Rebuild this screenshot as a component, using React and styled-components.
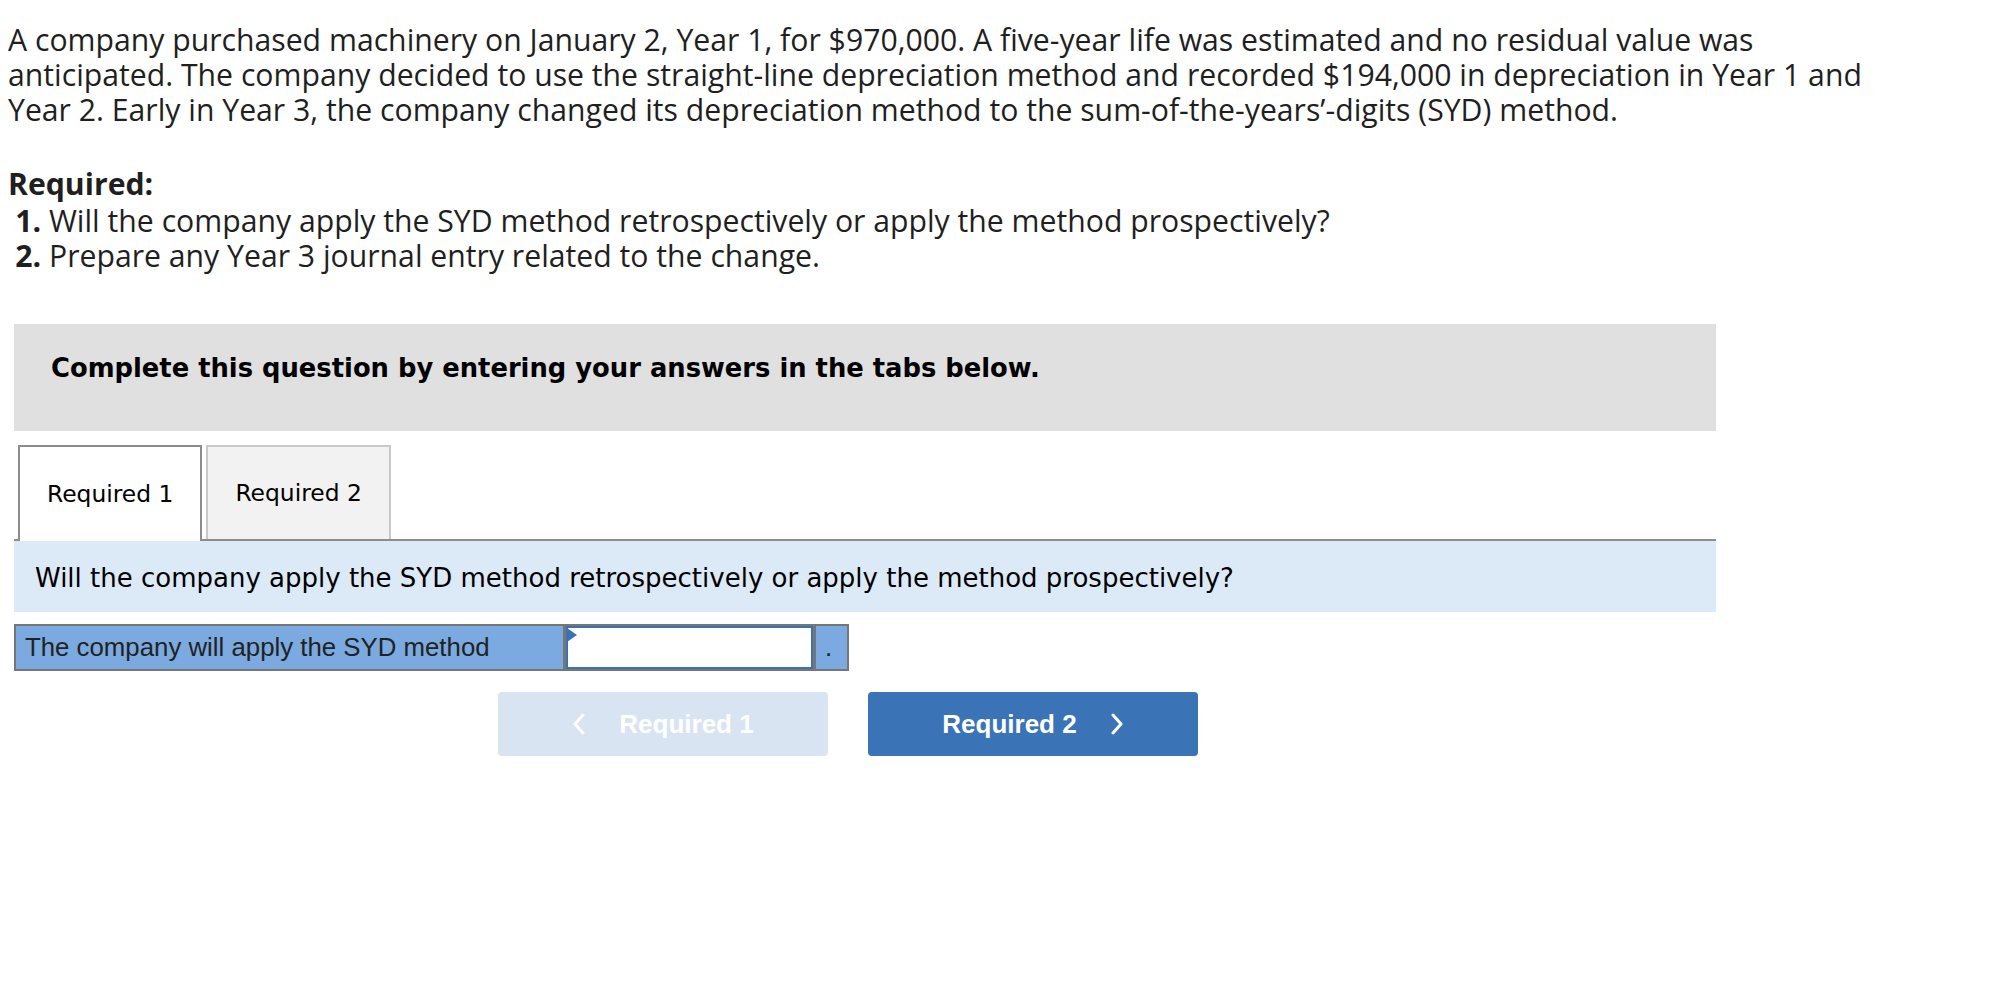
import React from 'react';
import styled, { createGlobalStyle } from 'styled-components';

const GlobalStyle = createGlobalStyle`
  body {
    margin: 8px;
    background: #fff;
    color: #1f1f1f;
    font-family: "Open Sans", "Liberation Sans", sans-serif;
  }
`;

const Intro = styled.p`
  width: 1895px;
  margin: 14px 0 0;
  font-size: 30.2px;
  line-height: 35px;
`;

const RequiredTitle = styled.div`
  margin-top: 39px;
  font-size: 30.2px;
  line-height: 35px;
  font-weight: 700;
`;

const RequiredList = styled.ol`
  margin: 2px 0 0;
  padding-left: 41px;
  font-size: 30.2px;
  line-height: 35px;

  & > li::marker {
    font-weight: 700;
  }
`;

const Section = styled.div`
  margin: 51px 0 0 6px;
  width: 1702px;
`;

const Instructions = styled.div`
  height: 107px;
  box-sizing: border-box;
  padding: 29px 37px 0;
  background: #e0e0e0;
  color: #000;
  font-family: "DejaVu Sans", Verdana, sans-serif;
  font-weight: 700;
  font-size: 25.8px;
  line-height: 30px;
`;

const TabRow = styled.div`
  margin-top: 14px;
  display: flex;
  align-items: flex-start;
  gap: 4px;
  padding-left: 4px;
  border-bottom: 2px solid #8c8c8c;
`;

const Tab = styled.button`
  display: flex;
  align-items: center;
  justify-content: center;
  box-sizing: border-box;
  padding: 0 27px;
  height: ${p => (p.active ? '96px' : '94px')};
  margin-bottom: ${p => (p.active ? '-2px' : '0')};
  background: ${p => (p.active ? '#fff' : '#f2f2f2')};
  border: 2px solid ${p => (p.active ? '#8c8c8c' : '#c8c8c8')};
  border-bottom: none;
  color: #000;
  font-family: "DejaVu Sans", Verdana, sans-serif;
  font-size: 23.4px;
  cursor: pointer;
`;

const Question = styled.div`
  background: #dceaf7;
  padding: 22px 21px 19px;
  color: #000;
  font-family: "DejaVu Sans", Verdana, sans-serif;
  font-size: 26px;
  line-height: 30px;
`;

const AnswerRow = styled.div`
  margin-top: 12px;
  display: flex;
  width: fit-content;
  height: 47px;
  box-sizing: border-box;
  border: 2px solid #767676;
  font-family: "Liberation Sans", Arial, sans-serif;
  font-size: 25.8px;
  color: #222;
`;

const Cell = styled.div`
  display: flex;
  align-items: center;
  box-sizing: border-box;
  width: ${p => p.width}px;
  padding-left: 9px;
  background: #7aaae0;
  border-left: ${p => (p.divided ? '3px solid #767676' : 'none')};
`;

const SelectCell = styled.div`
  position: relative;
  box-sizing: border-box;
  width: 250px;
  border-left: 3px solid #767676;
  background: #fff;
`;

const SelectBox = styled.div`
  height: 100%;
  box-sizing: border-box;
  border: 2px solid #3a73b5;
  background: #fff;
`;

const Flag = styled.span`
  position: absolute;
  top: 2px;
  left: 1px;
  width: 0;
  height: 0;
  border-top: 7px solid transparent;
  border-bottom: 7px solid transparent;
  border-left: 10px solid #3a73b5;
`;

const NavRow = styled.div`
  margin-top: 21px;
  display: flex;
  gap: 40px;
  padding-left: 484px;
`;

const NavButton = styled.button`
  display: flex;
  align-items: center;
  justify-content: center;
  gap: 33px;
  width: 330px;
  height: 64px;
  border: none;
  border-radius: 4px;
  background: ${p => (p.disabled ? '#d8e4f1' : '#3a74b6')};
  color: #fff;
  font-family: "Liberation Sans", Arial, sans-serif;
  font-weight: 700;
  font-size: 26px;
  cursor: ${p => (p.disabled ? 'default' : 'pointer')};
`;

const Chevron = ({ dir }) => (
  <svg width="14" height="22" viewBox="0 0 14 22">
    <polyline
      points={dir === 'left' ? '11,2 3,11 11,20' : '3,2 11,11 3,20'}
      fill="none"
      stroke="#fff"
      strokeWidth="3"
      strokeLinecap="round"
      strokeLinejoin="round"
    />
  </svg>
);

export default function App() {
  return (
    <>
      <GlobalStyle />
      <Intro>
        A company purchased machinery on January 2, Year 1, for $970,000. A five-year life was estimated and no
        residual value was anticipated. The company decided to use the straight-line depreciation method and
        recorded $194,000 in depreciation in Year 1 and Year 2. Early in Year 3, the company changed its
        depreciation method to the sum-of-the-years’-digits (SYD) method.
      </Intro>

      <RequiredTitle>Required:</RequiredTitle>
      <RequiredList>
        <li>Will the company apply the SYD method retrospectively or apply the method prospectively?</li>
        <li>Prepare any Year 3 journal entry related to the change.</li>
      </RequiredList>

      <Section>
        <Instructions>Complete this question by entering your answers in the tabs below.</Instructions>

        <TabRow>
          <Tab active>Required 1</Tab>
          <Tab>Required 2</Tab>
        </TabRow>

        <Question>Will the company apply the SYD method retrospectively or apply the method prospectively?</Question>

        <AnswerRow>
          <Cell width={547}>The company will apply the SYD method</Cell>
          <SelectCell>
            <SelectBox />
            <Flag />
          </SelectCell>
          <Cell width={34} divided>.</Cell>
        </AnswerRow>

        <NavRow>
          <NavButton disabled>
            <Chevron dir="left" />
            Required 1
          </NavButton>
          <NavButton>
            Required 2
            <Chevron dir="right" />
          </NavButton>
        </NavRow>
      </Section>
    </>
  );
}
